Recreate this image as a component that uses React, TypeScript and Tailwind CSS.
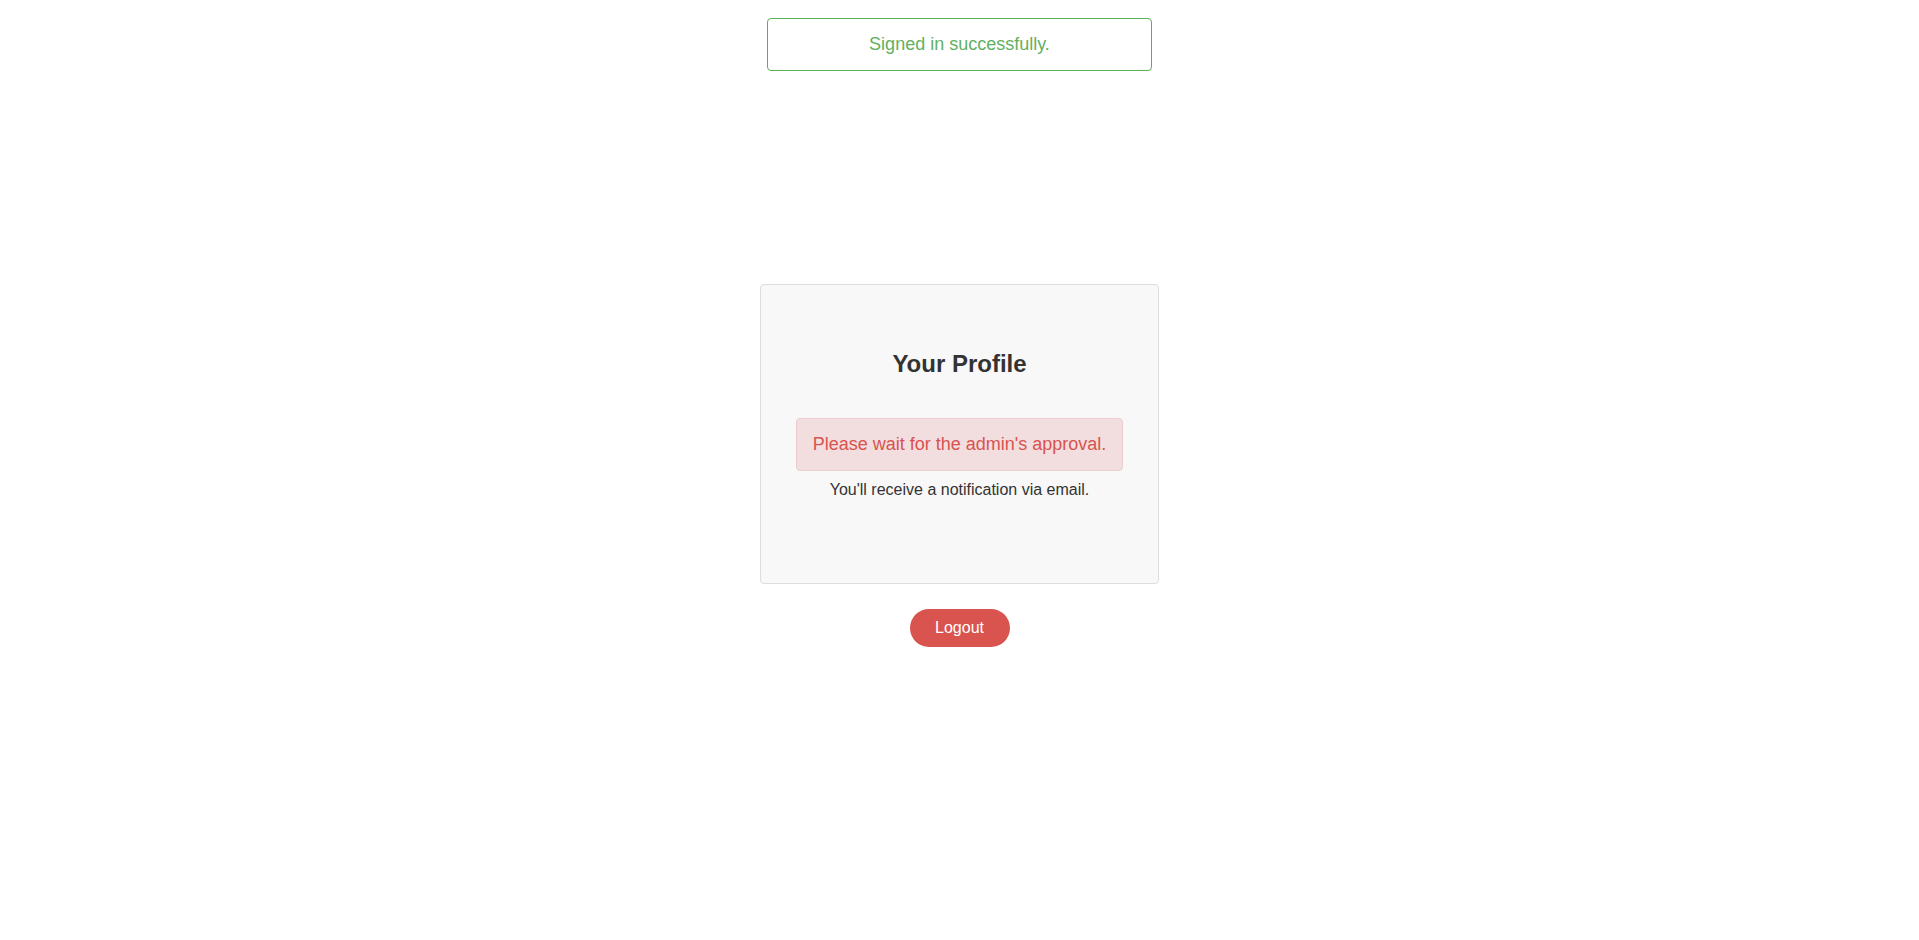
export default function App() {
  return (
    <main className="flex min-h-screen flex-col items-center bg-white font-['Liberation_Sans',Arial,sans-serif] text-[#333]">
      <div className="mt-[18px] flex h-[53px] w-[385px] items-center justify-center rounded-[4px] border border-[#5aaf5a] text-[18px] text-[#62b062]">
        Signed in successfully.
      </div>

      <section className="mt-[213px] flex h-[300px] w-[399px] flex-col items-center rounded-[4px] border border-[#ddd] bg-[#f8f8f8]">
        <h1 className="mt-[65px] text-[24px] font-bold leading-[28px]">Your Profile</h1>
        <div className="mt-[40px] flex h-[53px] w-[327px] items-center justify-center rounded-[4px] border border-[#ebccd1] bg-[#f2dede] text-[18px] text-[#d9534f]">
          Please wait for the admin's approval.
        </div>
        <p className="mt-[9px] text-[16px] leading-[20px]">You'll receive a notification via email.</p>
      </section>

      <button className="mt-[25px] h-[38px] w-[100px] rounded-full bg-[#d9534f] text-[16px] text-white">
        Logout
      </button>
    </main>
  );
}
